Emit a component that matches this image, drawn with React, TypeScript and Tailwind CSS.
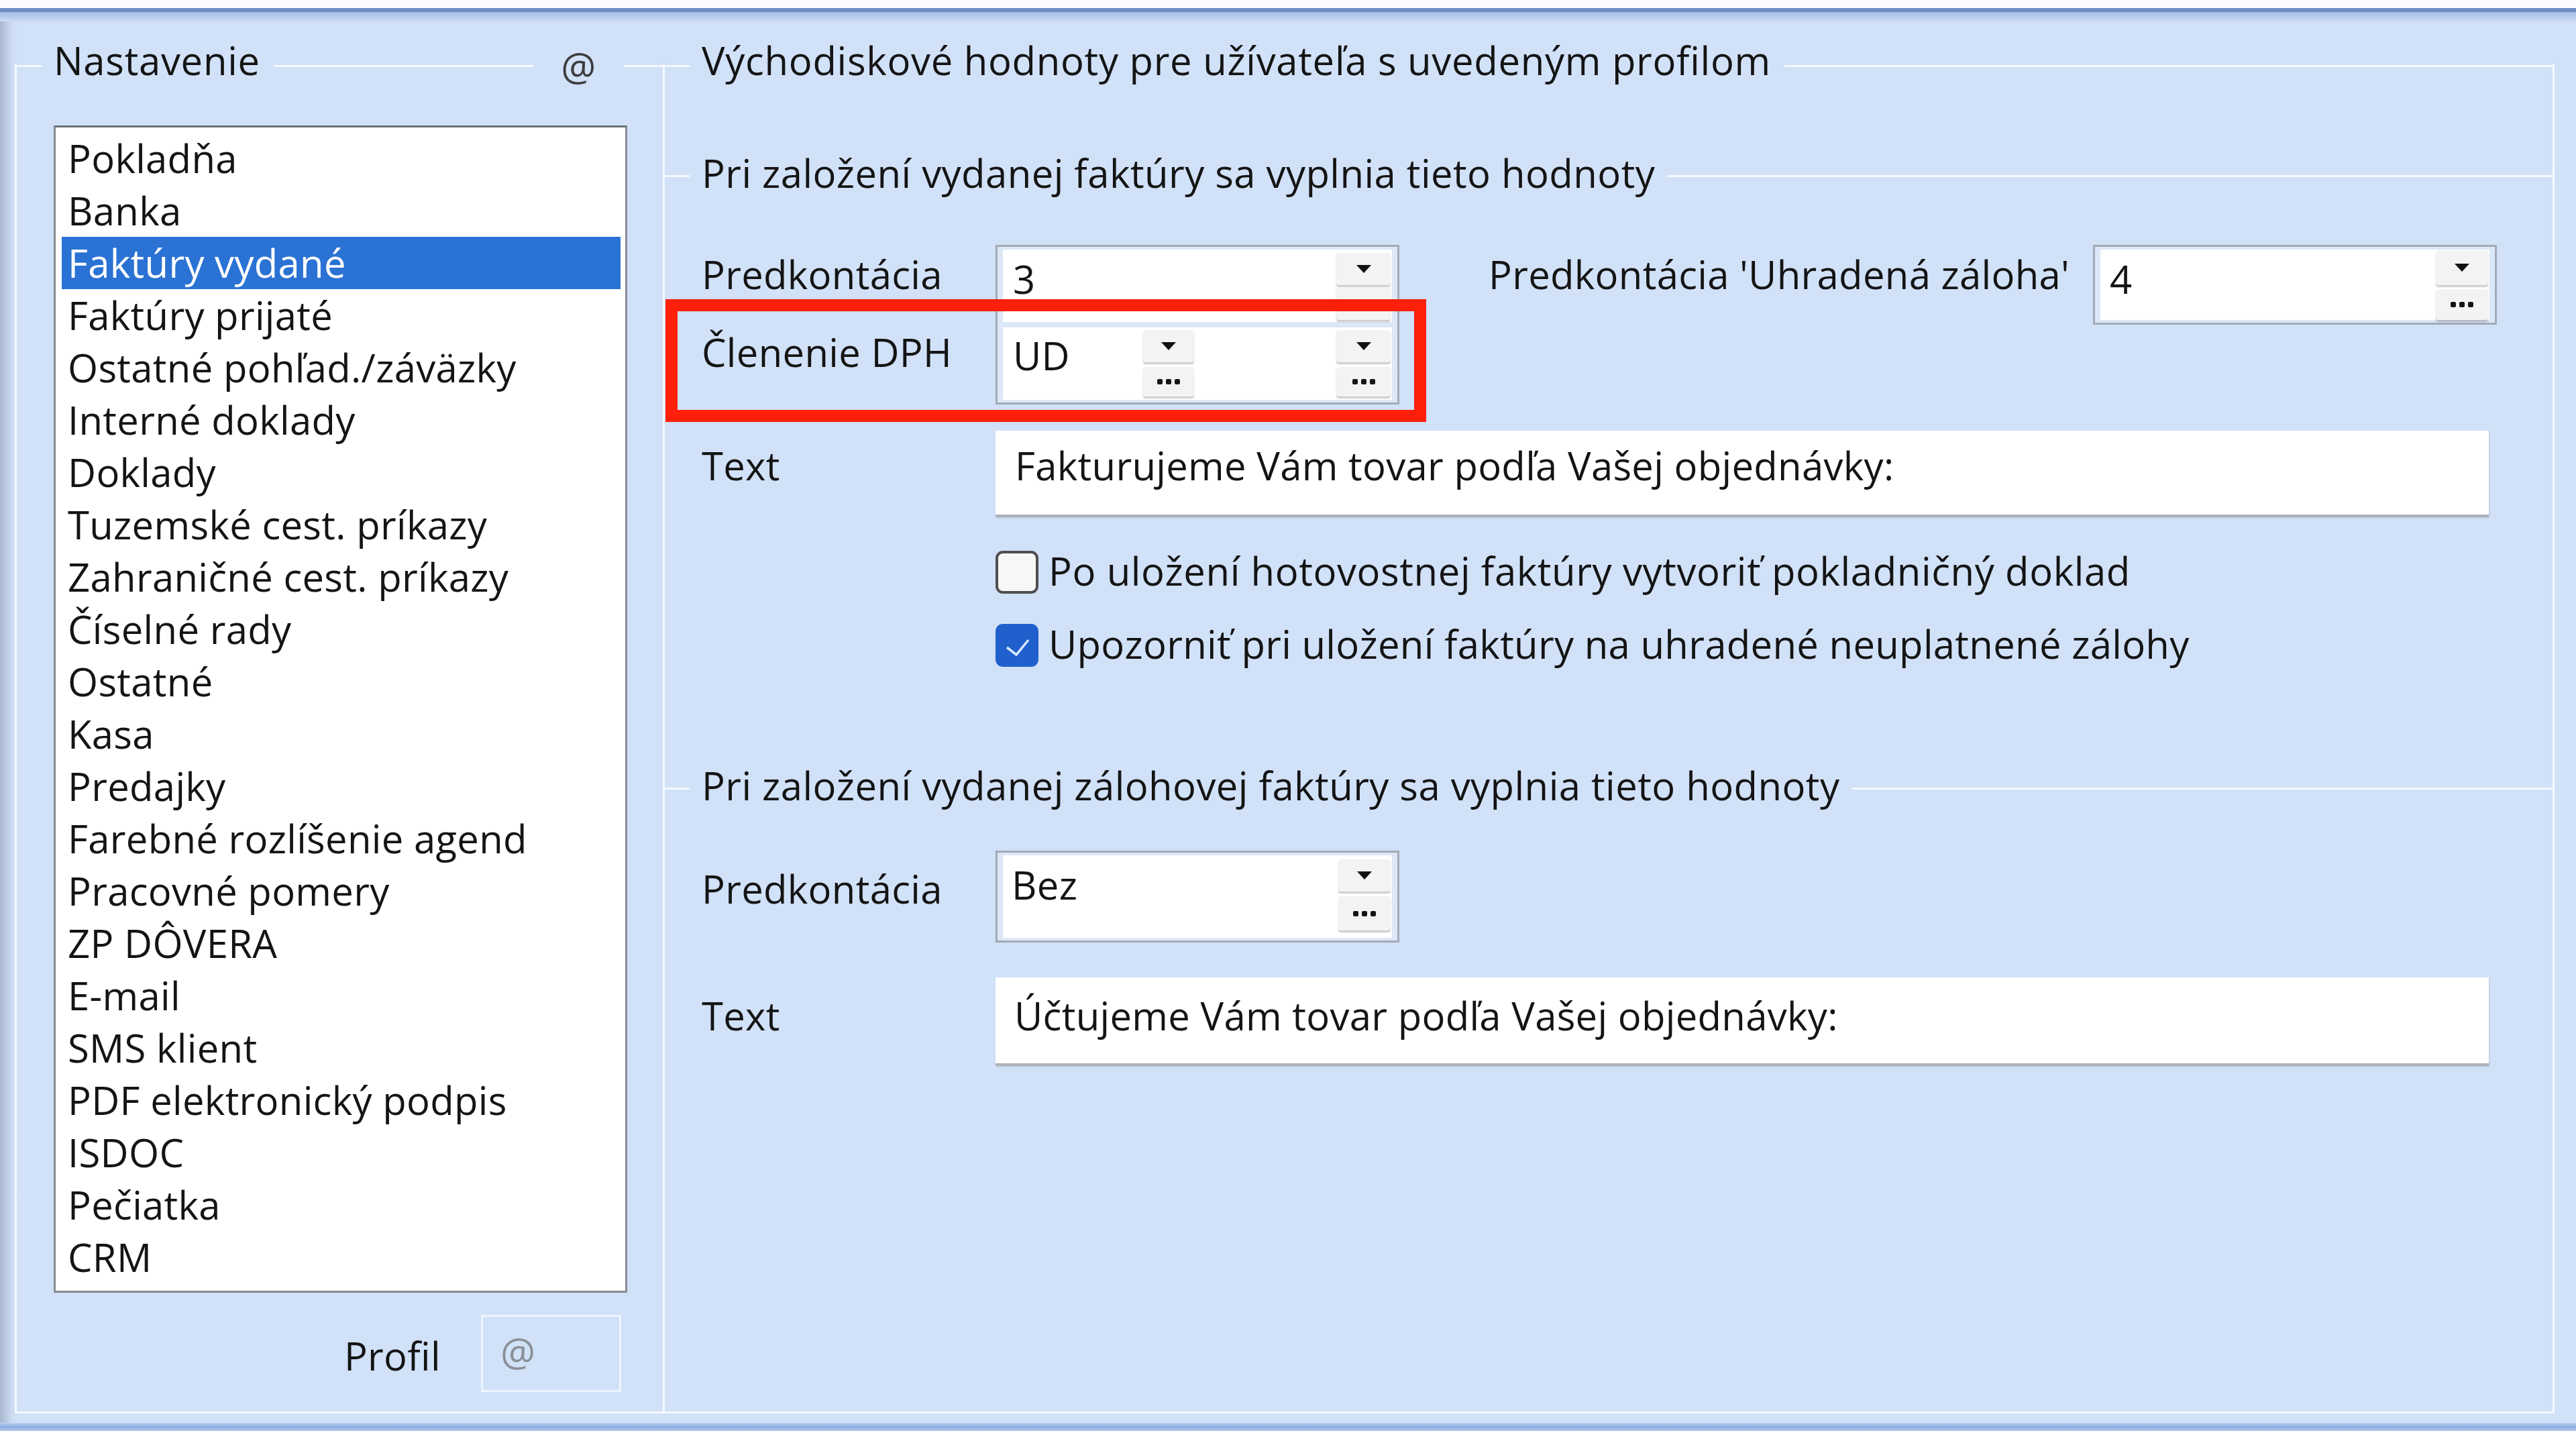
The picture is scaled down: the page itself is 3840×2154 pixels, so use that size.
import React from "react";

const ITEMS = [
  "Pokladňa",
  "Banka",
  "Faktúry vydané",
  "Faktúry prijaté",
  "Ostatné pohľad./záväzky",
  "Interné doklady",
  "Doklady",
  "Tuzemské cest. príkazy",
  "Zahraničné cest. príkazy",
  "Číselné rady",
  "Ostatné",
  "Kasa",
  "Predajky",
  "Farebné rozlíšenie agend",
  "Pracovné pomery",
  "ZP DÔVERA",
  "E-mail",
  "SMS klient",
  "PDF elektronický podpis",
  "ISDOC",
  "Pečiatka",
  "CRM",
];

const SELECTED = 2;

function Rule({ className = "" }: { className?: string }) {
  return <div className={`h-[3px] bg-[#f5f9ff] ${className}`} />;
}

function Arrow() {
  return (
    <svg width="24" height="14" viewBox="0 0 24 14">
      <path d="M1 1h22L12 13z" fill="#111" />
    </svg>
  );
}

function Dots() {
  return (
    <div className="flex gap-[5px]">
      <span className="h-[8px] w-[8px] rounded-[2px] bg-[#151515]" />
      <span className="h-[8px] w-[8px] rounded-[2px] bg-[#151515]" />
      <span className="h-[8px] w-[8px] rounded-[2px] bg-[#151515]" />
    </div>
  );
}

function Btn({ className = "", children }: { className?: string; children: React.ReactNode }) {
  return (
    <div
      className={`flex items-center justify-center rounded-[4px] bg-[#f3f3f3] shadow-[0_3px_2px_rgba(0,0,0,0.2)] ${className}`}
    >
      {children}
    </div>
  );
}

function Checkbox({ checked }: { checked?: boolean }) {
  if (checked) {
    return (
      <div className="flex h-[64px] w-[64px] shrink-0 items-center justify-center rounded-[11px] bg-[#1f60cc]">
        <svg width="64" height="64" viewBox="0 0 64 64">
          <path d="M17 35l14 11L49 24" fill="none" stroke="#dbe7ff" strokeWidth="3.5" />
        </svg>
      </div>
    );
  }
  return (
    <div className="h-[64px] w-[64px] shrink-0 rounded-[11px] border-[4px] border-[#4f4f4f] bg-[#f7f7f7]" />
  );
}

function SectionTitle({ title }: { title: string }) {
  return (
    <div className="flex h-[86px] items-center">
      <Rule className="w-[37px]" />
      <span className="whitespace-nowrap px-[18px] pb-[8px] tracking-[0.45px]">{title}</span>
      <Rule className="flex-1" />
    </div>
  );
}

function LeftGroup() {
  return (
    <div className="flex w-[966px] flex-col border-b-[3px] border-l-[3px] border-[#f5f9ff]">
      {/* frame caption with the profile mark on the right */}
      <div className="-ml-[3px] -mt-[41px] flex h-[86px] items-center">
        <Rule className="w-[40px]" />
        <span className="whitespace-nowrap pl-[18px] pr-[20px] pb-[16px] tracking-[0.7px]">Nastavenie</span>
        <Rule className="flex-1" />
        <span className="flex w-[135px] justify-center pt-[2px] text-[#3c3c3c]">@</span>
        <Rule className="w-[58px]" />
      </div>

      <div className="ml-[55px] mt-[46px] h-[1740px] w-[855px] border-[3px] border-[#868b93] border-t-[#6c7078] bg-white pt-[7px]">
        {ITEMS.map((item, i) => (
          <div
            key={item}
            className={
              i === SELECTED
                ? "ml-[9px] mr-[7px] flex h-[78px] items-center bg-[#2a72d4] px-[9px] text-white"
                : "ml-[9px] mr-[7px] flex h-[78px] items-center px-[9px]"
            }
          >
            {item}
          </div>
        ))}
      </div>

      <div className="mr-[62px] mt-[33px] flex items-center justify-end">
        <span className="mr-[60px] pt-[6px]">Profil</span>
        <div className="flex h-[115px] w-[209px] items-center border-[3px] border-[#eef4fd] pl-[26px] pb-[6px] text-[#8a8f96]">
          @
        </div>
      </div>
    </div>
  );
}

function RightGroup() {
  return (
    <div className="flex flex-1 flex-col border-x-[3px] border-b-[3px] border-[#f5f9ff]">
      <div className="-mx-[3px] -mt-[41px] flex h-[86px] items-center">
        <Rule className="w-[40px]" />
        <span className="whitespace-nowrap pl-[18px] pr-[20px] pb-[16px] tracking-[0.7px]">
          Východiskové hodnoty pre užívateľa s uvedeným profilom
        </span>
        <Rule className="flex-1" />
      </div>

      <div className="mt-[78px]">
        <SectionTitle title="Pri založení vydanej faktúry sa vyplnia tieto hodnoty" />
      </div>

      {/* account assignment + VAT breakdown */}
      <div className="ml-[55px] mt-[60px] flex items-start">
        <div className="flex w-[438px] flex-col">
          <div className="flex h-[88px] items-center">Predkontácia</div>
          <div className="flex h-[144px] items-center">Členenie DPH</div>
        </div>

        <div className="flex h-[238px] w-[602px] flex-col gap-[8px] border-[3px] border-[#a2aab5] bg-[#dce7f7] px-[8px] py-[4px]">
          <div className="flex h-[108px] bg-white">
            <div className="flex h-[88px] flex-1 items-center pl-[15px]">3</div>
            <div className="mr-[2px] flex w-[81px] flex-col gap-[3px] pt-[5px]">
              <Btn className="h-[48px]">
                <Arrow />
              </Btn>
              <Btn className="h-[49px]">
                <Dots />
              </Btn>
            </div>
          </div>
          <div className="flex flex-1 bg-white">
            <div className="flex h-[84px] w-[209px] items-center pl-[15px]">UD</div>
            <div className="flex w-[76px] flex-col gap-[7px] pt-[4px]">
              <Btn className="h-[48px]">
                <Arrow />
              </Btn>
              <Btn className="h-[44px]">
                <Dots />
              </Btn>
            </div>
            <div className="flex-1" />
            <div className="mr-[2px] flex w-[81px] flex-col gap-[7px] pt-[4px]">
              <Btn className="h-[48px]">
                <Arrow />
              </Btn>
              <Btn className="h-[44px]">
                <Dots />
              </Btn>
            </div>
          </div>
        </div>

        <div className="ml-[133px] flex h-[88px] w-[901px] items-center whitespace-nowrap">
          Predkontácia 'Uhradená záloha'
        </div>
        <div className="flex h-[119px] w-[602px] border-[3px] border-[#a2aab5] bg-[#dce7f7] px-[8px] py-[4px]">
          <div className="flex flex-1 bg-white">
            <div className="flex h-[88px] flex-1 items-center pl-[14px]">4</div>
            <div className="mr-[2px] flex w-[78px] flex-col gap-[6px] pt-[1px]">
              <Btn className="h-[52px]">
                <Arrow />
              </Btn>
              <Btn className="h-[46px]">
                <Dots />
              </Btn>
            </div>
          </div>
        </div>
      </div>

      <div className="ml-[55px] mt-[39px] flex items-start">
        <div className="flex h-[104px] w-[438px] items-center">Text</div>
        <div className="h-[129px] w-[2226px] border-b-[4px] border-[#aeb2b9] bg-white pl-[29px] shadow-[1px_1px_2px_rgba(0,0,0,0.12)]">
          <div className="flex h-[104px] items-center whitespace-nowrap">
            Fakturujeme Vám tovar podľa Vašej objednávky:
          </div>
        </div>
      </div>

      <div className="ml-[493px] mt-[49px] flex h-[65px] items-center gap-[15px]">
        <Checkbox />
        <span className="whitespace-nowrap pb-[4px] tracking-[0.6px]">
          Po uložení hotovostnej faktúry vytvoriť pokladničný doklad
        </span>
      </div>
      <div className="ml-[493px] mt-[45px] flex h-[64px] items-center gap-[15px]">
        <Checkbox checked />
        <span className="whitespace-nowrap pb-[4px]">
          Upozorniť pri uložení faktúry na uhradené neuplatnené zálohy
        </span>
      </div>

      <div className="mt-[138px]">
        <SectionTitle title="Pri založení vydanej zálohovej faktúry sa vyplnia tieto hodnoty" />
      </div>

      <div className="ml-[55px] mt-[50px] flex items-start">
        <div className="flex h-[114px] w-[438px] items-center">Predkontácia</div>
        <div className="flex h-[137px] w-[602px] border-[3px] border-[#a2aab5] bg-[#dce7f7] px-[8px] py-[4px]">
          <div className="flex flex-1 bg-white">
            <div className="flex h-[88px] flex-1 items-center pl-[13px]">Bez</div>
            <div className="mr-[2px] flex w-[78px] flex-col gap-[7px] pt-[6px]">
              <Btn className="h-[48px]">
                <Arrow />
              </Btn>
              <Btn className="h-[51px]">
                <Dots />
              </Btn>
            </div>
          </div>
        </div>
      </div>

      <div className="ml-[55px] mt-[52px] flex items-start">
        <div className="flex h-[114px] w-[438px] items-center">Text</div>
        <div className="h-[132px] w-[2226px] border-b-[4px] border-[#aeb2b9] bg-white pl-[28px] shadow-[1px_1px_2px_rgba(0,0,0,0.12)]">
          <div className="flex h-[114px] items-center whitespace-nowrap">
            Účtujeme Vám tovar podľa Vašej objednávky:
          </div>
        </div>
      </div>
    </div>
  );
}

export default function App() {
  return (
    <div className="relative h-[2154px] w-[3840px] overflow-hidden bg-white font-['Open_Sans',sans-serif] text-[58px] leading-none tracking-[0.3px] text-[#141414]">
      {/* window top edge */}
      <div className="h-[12px] bg-[#fbfcfe]" />
      <div className="h-[6px] bg-[#6f8ec6]" />
      <div className="h-[14px] bg-[linear-gradient(to_bottom,#a6bde5,#c9dbf5)]" />

      {/* client area */}
      <div className="flex h-[2089px] bg-[linear-gradient(to_right,#a9b8d1_0px,#b8c7df_8px,#cddcf4_18px,#d1e1f8_26px)] pb-[14px] pl-[22px] pr-[32px] pt-[64px]">
        <LeftGroup />
        <RightGroup />
      </div>

      {/* window bottom edge */}
      <div className="h-[12px] bg-[linear-gradient(to_bottom,#bcd0f1,#8eaee4_50%,#aec6ee)]" />
      <div className="h-[21px] bg-white" />

      {/* highlight frame around the VAT breakdown row */}
      <div className="absolute left-[992px] top-[446px] h-[183px] w-[1134px] border-[18px] border-[#ff200c]" />
    </div>
  );
}
